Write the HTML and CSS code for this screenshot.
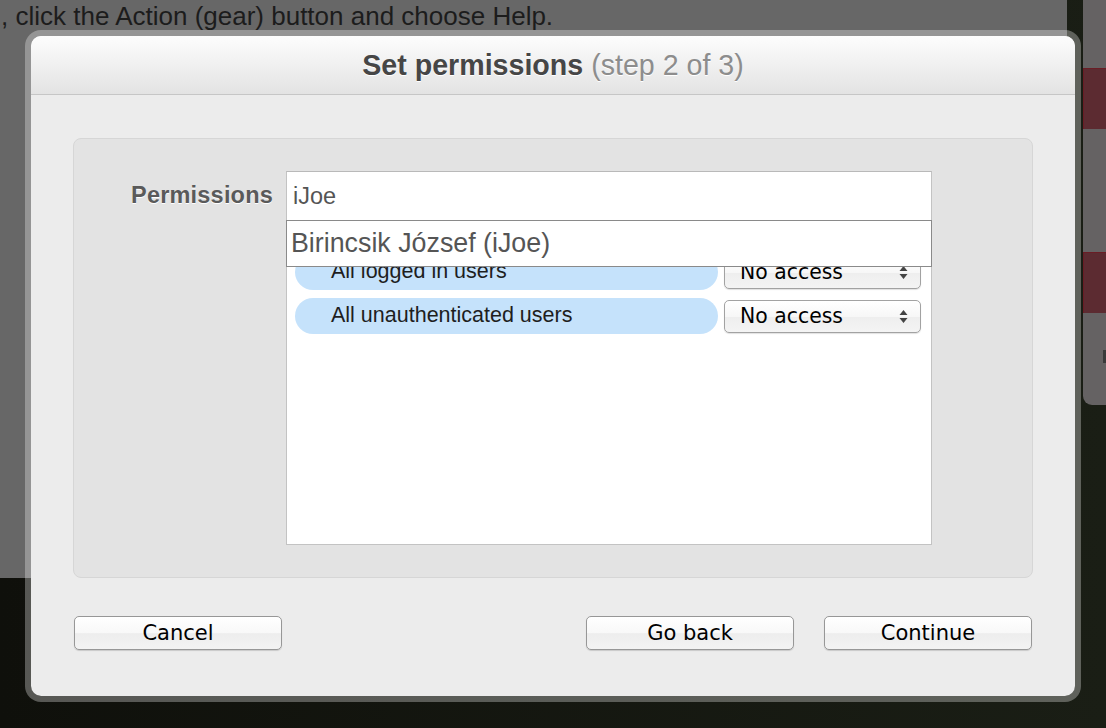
FILE: index.html
```html
<!DOCTYPE html>
<html>
<head>
<meta charset="utf-8">
<link rel="stylesheet" href="styles.css">
</head>
<body>
<div class="backdrop">
  <div class="page">
    <p class="hint">, click the Action (gear) button and choose Help.</p>
  </div>
  <div class="side">
    <div class="redbar"></div>
    <div class="redbar second"></div>
    <div class="glyph"></div>
  </div>
</div>

<div class="dialog">
  <div class="header">
    <span class="title">Set permissions</span> <span class="step">(step 2 of 3)</span>
  </div>
  <div class="body">
    <div class="panel">
      <div class="label">Permissions</div>
      <div class="field">
        <div class="input">iJoe</div>
        <div class="list">
          <div class="row">
            <div class="pill">All logged in users</div>
            <div class="select">No access
              <svg class="arrows" width="9" height="15" viewBox="0 0 9 15"><path d="M4.5 1 L8.5 6 L0.5 6 Z M4.5 14 L8.5 9 L0.5 9 Z" fill="#444"/></svg>
            </div>
          </div>
          <div class="row">
            <div class="pill">All unauthenticated users</div>
            <div class="select">No access
              <svg class="arrows" width="9" height="15" viewBox="0 0 9 15"><path d="M4.5 1 L8.5 6 L0.5 6 Z M4.5 14 L8.5 9 L0.5 9 Z" fill="#444"/></svg>
            </div>
          </div>
        </div>
        <div class="suggest">Birincsik József (iJoe)</div>
      </div>
    </div>
    <div class="buttons">
      <div class="btn">Cancel</div>
      <div class="spacer"></div>
      <div class="btn">Go back</div>
      <div class="btn">Continue</div>
    </div>
  </div>
</div>
</body>
</html>
```
FILE: styles.css
```css
html, body {
  margin: 0;
  padding: 0;
}
body {
  width: 1106px;
  height: 728px;
  overflow: hidden;
  background: linear-gradient(90deg, #0f100b, #1a1e15);
  font-family: "Liberation Sans", Arial, sans-serif;
  position: relative;
}
.backdrop {
  display: flex;
  align-items: flex-start;
  height: 728px;
}
.page {
  width: 1067px;
  height: 578px;
  background: #676767;
  overflow: hidden;
}
.hint {
  margin: 1px 0 0 1px;
  font-size: 26px;
  line-height: 30px;
  color: #1c1c1c;
  white-space: nowrap;
}
.side {
  margin-left: 16px;
  width: 23px;
  height: 337px;
  padding-top: 68px;
  background: #656263;
  border-bottom-left-radius: 9px;
  overflow: hidden;
}
.redbar {
  height: 60px;
  background: #5c2b31;
  border-top: 1px solid #6a1d25;
  border-left: 1px solid #6a1d25;
}
.redbar.second {
  margin-top: 123px;
}
.glyph {
  margin: 37px 0 0 20px;
  width: 3px;
  height: 13px;
  background: #3a3a3a;
}

.dialog {
  position: absolute;
  left: 25px;
  top: 30px;
  width: 1044px;
  height: 660px;
  border: 6px solid rgba(255, 255, 255, 0.3);
  border-radius: 16px;
  background: #ececec;
  background-clip: padding-box;
  display: flex;
  flex-direction: column;
}
.header {
  height: 58px;
  border-bottom: 1px solid #c6c6c6;
  border-radius: 10px 10px 0 0;
  background: linear-gradient(#fdfdfd, #e3e3e3);
  text-align: center;
  line-height: 58px;
  font-size: 28.6px;
  white-space: nowrap;
}
.title {
  font-weight: bold;
  color: #464646;
  text-shadow: 0 1px 0 #fff;
}
.step {
  color: #8d8d8d;
  text-shadow: 0 1px 0 #fff;
}
.body {
  padding: 43px 42px 0 42px;
}
.panel {
  height: 406px;
  padding-top: 32px;
  background: #e3e3e3;
  border: 1px solid #d6d6d6;
  border-radius: 8px;
  display: flex;
  align-items: flex-start;
  gap: 13px;
}
.label {
  width: 199px;
  text-align: right;
  font-size: 23.5px;
  font-weight: bold;
  letter-spacing: 0.2px;
  color: #5a5a5a;
  text-shadow: 0 1px 0 #fff;
  line-height: 48px;
}
.field {
  position: relative;
  width: 646px;
  height: 374px;
  box-sizing: border-box;
  border: 1px solid #c3c3c3;
  border-top-color: #b9b9b9;
  background: #fff;
}
.input {
  height: 48px;
  border-bottom: 1px solid #c8c8c8;
  padding-left: 6px;
  font-size: 23.5px;
  line-height: 48px;
  color: #555;
}
.list {
  padding: 33px 10px 0 8px;
  display: flex;
  flex-direction: column;
  gap: 8px;
}
.row {
  display: flex;
  align-items: center;
  gap: 6px;
  height: 36px;
}
.pill {
  flex: 1;
  height: 36px;
  border-radius: 18px;
  background: #c5e2fb;
  padding-left: 36px;
  font-size: 21.5px;
  line-height: 34px;
  color: #1e1e1e;
  white-space: nowrap;
}
.select {
  position: relative;
  width: 197px;
  height: 33px;
  box-sizing: border-box;
  border: 1px solid #a2a2a2;
  border-radius: 5px;
  background: linear-gradient(#ffffff, #f7f7f7 50%, #eeeeee 51%, #f4f4f4);
  box-shadow: 0 1px 1px rgba(0, 0, 0, 0.12);
  padding-left: 15px;
  font-family: "DejaVu Sans", sans-serif;
  font-size: 20.4px;
  line-height: 31px;
  color: #000;
}
.arrows {
  position: absolute;
  right: 12px;
  top: 8px;
}
.suggest {
  position: absolute;
  left: -1px;
  top: 48px;
  width: 646px;
  height: 47px;
  box-sizing: border-box;
  border: 1.5px solid #8a8a8a;
  background: #fff;
  padding-left: 4px;
  font-size: 26.8px;
  line-height: 44px;
  color: #555;
  white-space: nowrap;
}
.buttons {
  margin-top: 38px;
  display: flex;
  gap: 30px;
  padding: 0 1px;
}
.spacer {
  flex: 1;
}
.btn {
  width: 208px;
  height: 34px;
  box-sizing: border-box;
  border: 1px solid #979797;
  border-radius: 5px;
  background: linear-gradient(#ffffff, #f8f8f8 50%, #ededed 52%, #f3f3f3);
  box-shadow: 0 1px 1px rgba(0, 0, 0, 0.15);
  text-align: center;
  font-family: "DejaVu Sans", sans-serif;
  font-size: 21px;
  line-height: 32px;
  color: #000;
}
```
